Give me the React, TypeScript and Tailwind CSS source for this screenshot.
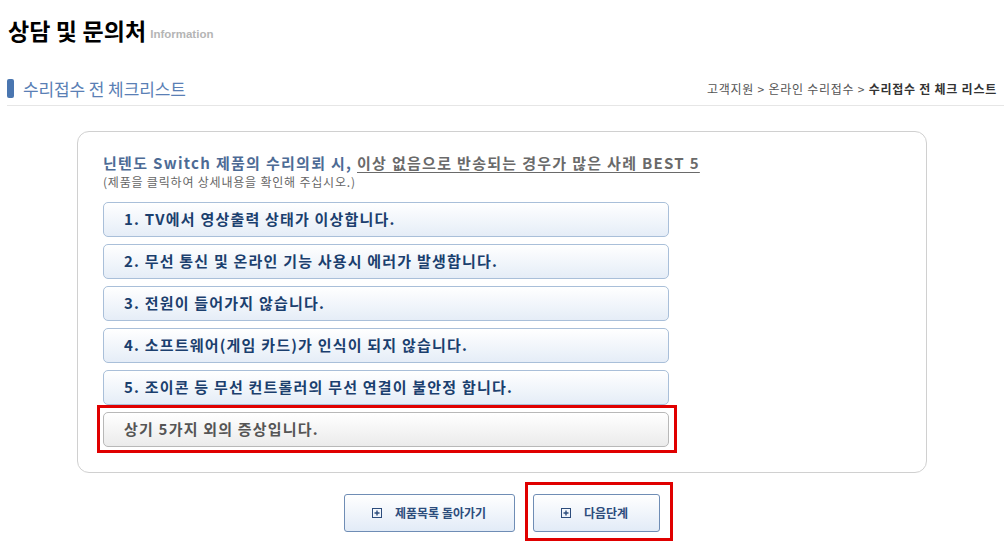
const items = [
  "1. TV에서 영상출력 상태가 이상합니다.",
  "2. 무선 통신 및 온라인 기능 사용시 에러가 발생합니다.",
  "3. 전원이 들어가지 않습니다.",
  "4. 소프트웨어(게임 카드)가 인식이 되지 않습니다.",
  "5. 조이콘 등 무선 컨트롤러의 무선 연결이 불안정 합니다.",
];

const font = { fontFamily: '"Noto Sans CJK KR", "Noto Sans", sans-serif' };

function PlusBox() {
  return (
    <svg width="10" height="10" viewBox="0 0 10 10" className="shrink-0">
      <rect x="0.5" y="0.5" width="9" height="9" fill="none" stroke="#2c4c7c" />
      <path d="M5 2.5v5M2.5 5h5" stroke="#2c4c7c" strokeWidth="1.4" />
    </svg>
  );
}

export default function App() {
  return (
    <div className="w-[1004px] h-[548px] bg-white overflow-hidden" style={font}>
      <div className="pl-[8px] pt-[14px] flex items-end gap-[4px]">
        <h1 className="text-[23px] leading-[32px] font-bold text-black tracking-[0.1px]">
          상담 및 문의처
        </h1>
        <span className="text-[11.5px] font-bold text-[#b5b5b5] mb-[3px] font-['Liberation_Sans',sans-serif]">
          Information
        </span>
      </div>

      <div className="mt-[30px] ml-[7px] mr-0 flex items-center justify-between border-b border-[#e6e6e6] h-[30px] pb-[4px]">
        <div className="flex items-center gap-[9px]">
          <span className="block w-[7px] h-[19px] rounded-[2px] bg-[#4a76b0]" />
          <h2 className="text-[17px] text-[#5a7fb5] tracking-[-0.1px] leading-none">
            수리접수 전 체크리스트
          </h2>
        </div>
        <div className="text-[12px] text-[#555] pr-[7px] tracking-[0.75px]">
          고객지원 &gt; 온라인 수리접수 &gt;{" "}
          <b className="text-[#333]">수리접수 전 체크 리스트</b>
        </div>
      </div>

      <div className="mx-[77px] mt-[25px] border border-[#d0d0d0] rounded-[12px] pl-[25px] pt-[22px] pb-[25px]">
        <p className="text-[15px] font-bold leading-[18px] tracking-[1.3px]">
          <span className="text-[#4d6b95]">닌텐도 Switch 제품의 수리의뢰 시, </span>
          <span className="text-[#6a6a6a] underline underline-offset-[3px]">
            이상 없음으로 반송되는 경우가 많은 사례 BEST 5
          </span>
        </p>
        <p className="text-[12px] text-[#666] leading-[16px] mt-[2px] tracking-[0.8px]">
          (제품을 클릭하여 상세내용을 확인해 주십시오.)
        </p>

        <div className="mt-[12px] flex flex-col gap-[7px] w-[566px]">
          {items.map((t) => (
            <div
              key={t}
              className="h-[35px] flex items-center pl-[20px] rounded-[5px] border border-[#a9bfd9] bg-gradient-to-b from-white to-[#e5edf7] text-[15px] font-bold text-[#1b3f6e] tracking-[1.2px]"
            >
              {t}
            </div>
          ))}
          <div className="relative">
            <div className="h-[35px] flex items-center pl-[20px] rounded-[5px] border border-[#b8b8b8] bg-gradient-to-b from-white to-[#ebebeb] text-[15px] font-bold text-[#555] tracking-[1.2px]">
              상기 5가지 외의 증상입니다.
            </div>
            <span className="absolute -left-[6px] -right-[8px] -top-[7px] -bottom-[6px] border-[3px] border-[#e00000]" />
          </div>
        </div>
      </div>

      <div className="mt-[21px] flex justify-center gap-[18px]">
        <button className="w-[171px] h-[38px] flex items-center pl-[27px] gap-[13px] rounded-[3px] border border-[#6f8db5] bg-gradient-to-b from-white to-[#e2ebf7] text-[12px] font-bold text-[#2c4c7c]">
          <PlusBox />
          제품목록 돌아가기
        </button>
        <div className="relative">
          <button className="w-[127px] h-[38px] flex items-center pl-[27px] gap-[13px] rounded-[3px] border border-[#6f8db5] bg-gradient-to-b from-white to-[#e2ebf7] text-[12px] font-bold text-[#2c4c7c]">
            <PlusBox />
            다음단계
          </button>
          <span className="absolute -left-[8px] -right-[13px] -top-[12px] -bottom-[9px] border-[3px] border-[#e00000]" />
        </div>
      </div>
    </div>
  );
}
